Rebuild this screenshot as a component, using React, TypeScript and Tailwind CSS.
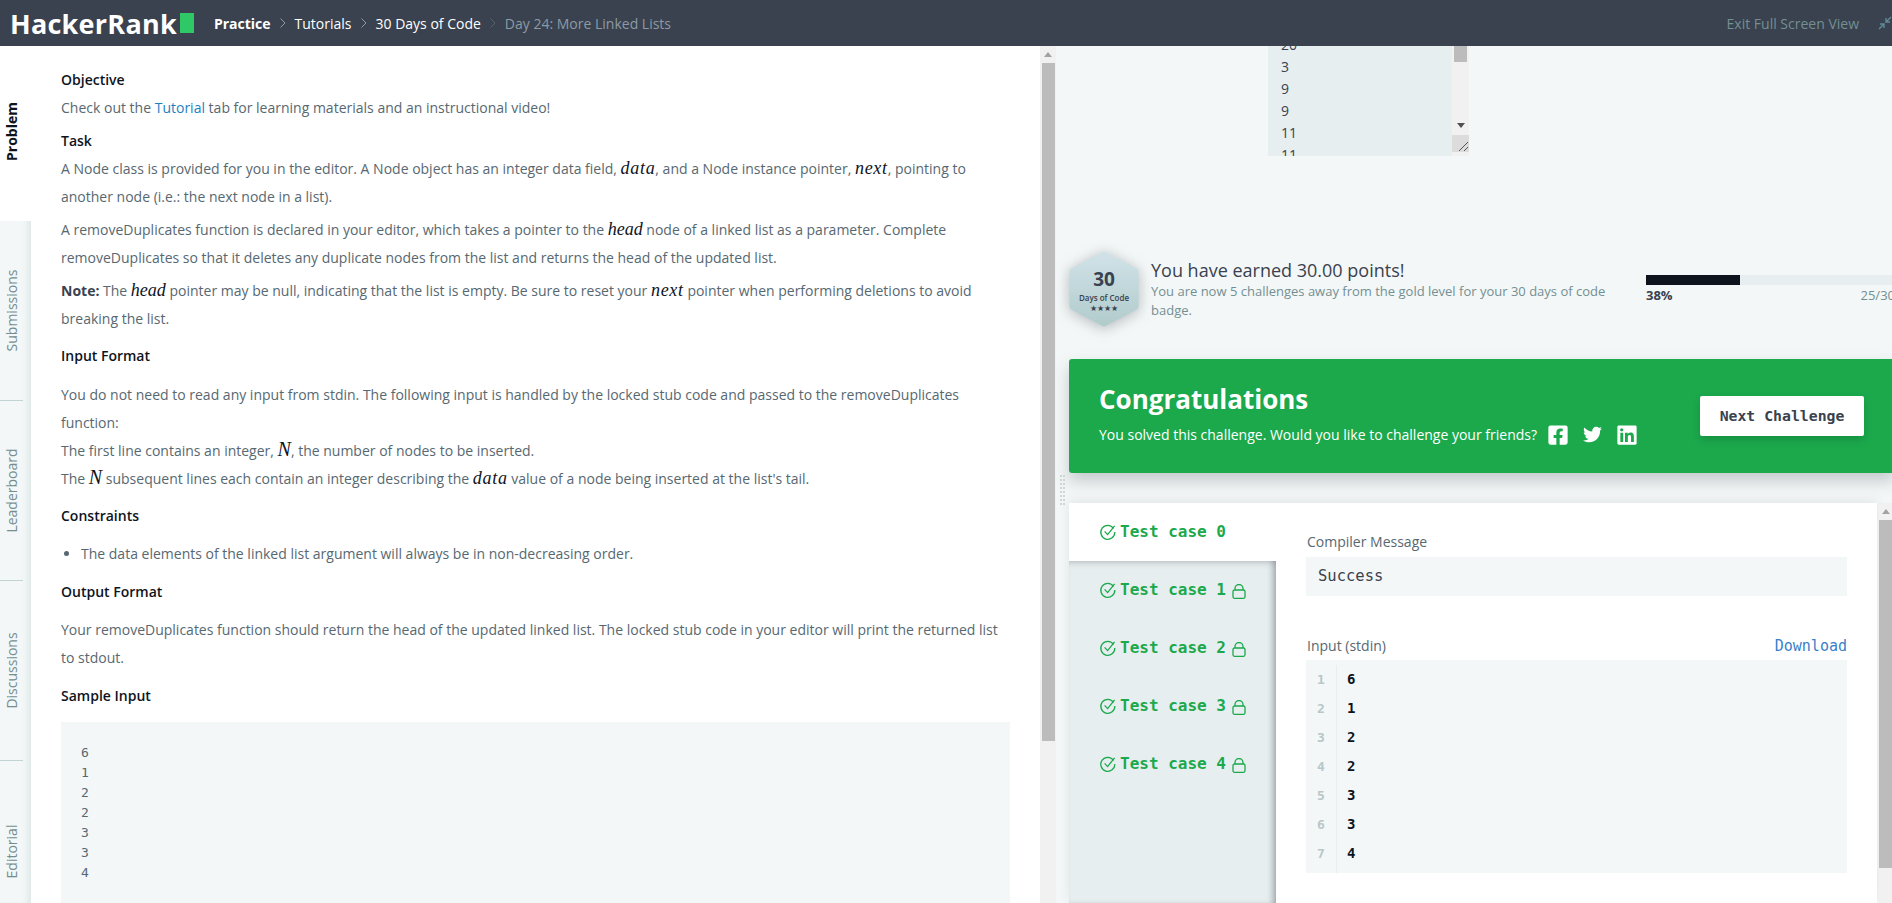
import { FaFacebookSquare, FaTwitter, FaLinkedin } from 'react-icons/fa'

// ----------------------------------------------------------------------

const Math = ({ children, className }: { children: string; className?: string }) => (
  <span className={`font-['Liberation_Serif',serif] text-[18px] italic leading-none text-[#0e141e] ${className ?? ''}`}>
    {children}
  </span>
)

const Heading = ({ children, className }: { children: string; className?: string }) => (
  <div className={`h-[28px] font-semibold leading-[28px] text-[#0e141e] ${className ?? ''}`}>{children}</div>
)

function SideTab({ label, last }: { label: string; last?: boolean }) {
  return (
    <div className={`flex h-[180px] w-[23px] items-center justify-center ${last ? '' : 'border-b border-[#c2d3d3]'}`}>
      <span className="-rotate-90 whitespace-nowrap text-[14px] text-[#738f93]">{label}</span>
    </div>
  )
}

function Check() {
  return (
    <svg width="18" height="18" viewBox="0 0 18 18" fill="none" stroke="#1ba94c" strokeWidth="1.3" className="shrink-0">
      <path d="M14.6 5.4A7 7 0 1 0 15.8 9" />
      <path d="M5.6 8.4 8.6 11.6 15.6 2.8" />
    </svg>
  )
}

function Lock() {
  return (
    <svg width="14" height="15" viewBox="0 0 14 15" fill="none" stroke="#1ba94c" strokeWidth="1.3" className="ml-[3px] mt-[2px] shrink-0">
      <rect x="1" y="6" width="12" height="8.3" rx="1.5" />
      <path d="M3 6V4.5a4 4 0 0 1 8 0V6" />
    </svg>
  )
}

function TestTab({ n, active }: { n: number; active?: boolean }) {
  return (
    <div className="flex h-[58px] items-center gap-[3px] pl-[30px]">
      <Check />
      <span className="whitespace-pre font-['DejaVu_Sans_Mono',monospace] text-[16px] font-bold text-[#1ba94c]">
        Test case {n}
      </span>
      {!active && <Lock />}
    </div>
  )
}

function Chevron({ dim }: { dim?: boolean }) {
  return (
    <svg width="8" height="12" viewBox="0 0 8 12" fill="none" stroke={dim ? '#56616d' : '#8d9aa6'} strokeWidth="1" className="mx-[8px]">
      <path d="M1.5 1.5 6 6l-4.5 4.5" />
    </svg>
  )
}

export default function App() {
  return (
    <div className="flex h-[903px] w-[1892px] flex-col overflow-hidden bg-white font-['Open_Sans',sans-serif] text-[14px] text-[#576871]">
      {/* top bar */}
      <header className="flex h-[46px] shrink-0 items-center bg-[#39424e] pl-[10px]">
        <span className="text-[27px] font-bold leading-none tracking-[0.25px] text-white">HackerRank</span>
        <span className="ml-[3px] h-[20px] w-[14px] bg-[#2ec866]" />
        <nav className="ml-[20px] flex items-center text-[14px]">
          <span className="font-bold text-white">Practice</span>
          <Chevron />
          <span className="text-white">Tutorials</span>
          <Chevron />
          <span className="text-white">30 Days of Code</span>
          <Chevron dim />
          <span className="text-[#8d9aa6]">Day 24: More Linked Lists</span>
        </nav>
        <span className="ml-auto text-[14px] text-[#738f93]">Exit Full Screen View</span>
        <svg width="14" height="14" viewBox="0 0 14 14" fill="none" stroke="#5f8a96" strokeWidth="1.4" className="ml-[19px]">
          <path d="M1 13 6 8M2 8h4v4M13 1 8 6M12 6H8V2" />
        </svg>
      </header>

      <main className="flex min-h-0 flex-1">
        {/* left rail */}
        <div className="w-[31px] shrink-0 overflow-hidden bg-[#f3f7f7] shadow-[inset_-7px_0_6px_-4px_#dde6e6]">
          <div className="flex h-[175px] items-center justify-center bg-white pb-[5px] pr-[8px]">
            <span className="-rotate-90 text-[14px] font-bold text-[#0e141e]">Problem</span>
          </div>
          <SideTab label="Submissions" />
          <SideTab label="Leaderboard" />
          <SideTab label="Discussions" />
          <SideTab label="Editorial" last />
        </div>

        {/* problem statement */}
        <div className="w-[1009px] shrink-0 overflow-hidden pl-[30px] pr-[30px] pt-[20px] leading-[28px]">
          <Heading>Objective</Heading>
          <p>
            Check out the <span className="text-[#1d7fc4]">Tutorial</span> tab for learning materials and an instructional video!
          </p>
          <Heading className="mt-[5px]">Task</Heading>
          <p>
            A Node class is provided for you in the editor. A Node object has an integer data field,{' '}
            <Math className="tracking-[0.7px]">data</Math>, and a Node instance pointer,{' '}
            <Math className="tracking-[0.7px]">next</Math>, pointing to another node (i.e.: the next node in a list).
          </p>
          <p className="mt-[5px]">
            A removeDuplicates function is declared in your editor, which takes a pointer to the <Math>head</Math> node of a
            linked list as a parameter. Complete removeDuplicates so that it deletes any duplicate nodes from the list and
            returns the head of the updated list.
          </p>
          <p className="mt-[5px]">
            <strong className="font-bold text-[#39424e]">Note:</strong> The <Math>head</Math> pointer may be null, indicating
            that the list is empty. Be sure to reset your <Math className="tracking-[0.7px]">next</Math> pointer when performing
            deletions to avoid breaking the list.
          </p>
          <Heading className="mt-[9px]">Input Format</Heading>
          <p className="mt-[11px]">
            You do not need to read any input from stdin. The following input is handled by the locked stub code and passed to
            the removeDuplicates function:
          </p>
          <p>
            The first line contains an integer, <Math className="text-[20px]">N</Math>, the number of nodes to be inserted.
          </p>
          <p>
            The <Math className="text-[20px]">N</Math> subsequent lines each contain an integer describing the{' '}
            <Math className="tracking-[0.7px]">data</Math> value of a node being inserted at the list's tail.
          </p>
          <Heading className="mt-[9px]">Constraints</Heading>
          <ul className="mt-[10px] list-disc pl-[20px]">
            <li>The data elements of the linked list argument will always be in non-decreasing order.</li>
          </ul>
          <Heading className="mt-[10px]">Output Format</Heading>
          <p className="mt-[10px]">
            Your removeDuplicates function should return the head of the updated linked list. The locked stub code in your
            editor will print the returned list to stdout.
          </p>
          <Heading className="mt-[10px]">Sample Input</Heading>
          <pre className="mt-[12px] h-[200px] bg-[#f3f7f7] pl-[20px] pt-[21px] font-['DejaVu_Sans_Mono',monospace] text-[13px] leading-[20px] text-[#576871]">
            {'6\n1\n2\n2\n3\n3\n4'}
          </pre>
        </div>

        {/* page scrollbar */}
        <div className="flex h-full w-[16px] shrink-0 flex-col items-center bg-[#f1f1f1]">
          <div className="mb-[6px] mt-[6px] h-0 w-0 border-x-[4px] border-b-[5px] border-x-transparent border-b-[#a3a3a3]" />
          <div className="h-[678px] w-[13px] bg-[#bcbcbc]" />
        </div>

        {/* results pane */}
        <div className="relative min-w-0 flex-1 overflow-hidden bg-[#f3f7f7]">
          <div className="w-[840px] pl-[13px]">
            {/* stdin echo, scrolled */}
            <div className="ml-[199px] flex h-[110px] w-[201px] overflow-hidden bg-[#e7eeef] pl-[13px]">
              <pre className="-mt-[12px] flex-1 font-['Open_Sans',sans-serif] text-[14px] leading-[22px] text-[#39424e]">
                {'20\n3\n9\n9\n11\n11'}
              </pre>
              <div className="flex w-[17px] flex-col items-center bg-[#f1f1f1]">
                <div className="h-[16px] w-[13px] bg-[#bcbcbc]" />
                <div className="mt-[61px] h-0 w-0 border-x-[4px] border-t-[5px] border-x-transparent border-t-[#505050]" />
                <div className="mt-[7px] h-[17px] w-[17px] bg-[#dcdcdc]">
                  <svg width="17" height="17" viewBox="0 0 17 17" fill="none" stroke="#555" strokeWidth="1">
                    <path d="M7 16 16 7M12 16 16 12" />
                  </svg>
                </div>
              </div>
            </div>

            {/* points */}
            <div className="mt-[95px] flex h-[76px]">
              <div className="relative flex h-[76px] w-[70px] shrink-0 flex-col items-center pt-[16px] text-[#39424e]">
                <svg
                  width="70"
                  height="76"
                  viewBox="0 0 70 76"
                  className="absolute left-0 top-0 drop-shadow-[0_2px_7px_rgba(57,66,78,0.35)]"
                >
                  <defs>
                    <linearGradient id="badge" x1="0" y1="0" x2="0" y2="1">
                      <stop offset="0" stopColor="#d0e2e8" />
                      <stop offset="1" stopColor="#b2cccc" />
                    </linearGradient>
                  </defs>
                  <polygon
                    points="35,3 67,20 67,56 35,73 3,56 3,20"
                    fill="url(#badge)"
                    stroke="url(#badge)"
                    strokeWidth="5"
                    strokeLinejoin="round"
                  />
                </svg>
                <span className="relative text-[19px] font-bold leading-[24px]">30</span>
                <span className="relative mt-[2px] text-[8px] font-semibold leading-[10px]">Days of Code</span>
                <span className="relative text-[8px] leading-[10px]">★★★★</span>
              </div>
              <div className="ml-[12px] w-[480px] pt-[7px]">
                <div className="text-[18px] leading-[24px] text-[#39424e]">You have earned 30.00 points!</div>
                <div className="text-[13px] leading-[19px] text-[#738f93]">
                  You are now 5 challenges away from the gold level for your 30 days of code badge.
                </div>
              </div>
              <div className="ml-[15px] w-[249px] shrink-0 pt-[24px]">
                <div className="h-[10px] bg-[#e7eeef]">
                  <div className="h-full w-[94px] bg-[#0e141e]" />
                </div>
                <div className="flex justify-between text-[13px] leading-[20px]">
                  <span className="font-bold text-[#39424e]">38%</span>
                  <span className="text-[#738f93]">25/30</span>
                </div>
              </div>
            </div>

            {/* congratulations */}
            <div className="mt-[32px] flex h-[114px] w-[826px] items-center rounded-[3px] bg-[#1ba94c] pl-[30px] pr-[31px] shadow-[0_8px_16px_rgba(57,66,78,0.25)]">
              <div className="mb-[5px]">
                <div className="text-[26px] font-bold leading-[34px] text-white">Congratulations</div>
                <div className="mt-[8px] flex items-center text-[14px] text-white">
                  You solved this challenge. Would you like to challenge your friends?
                  <FaFacebookSquare className="ml-[10px] text-[22px]" />
                  <FaTwitter className="ml-[14px] text-[19px]" />
                  <FaLinkedin className="ml-[14px] text-[22px]" />
                </div>
              </div>
              <div className="ml-auto flex h-[40px] w-[164px] items-center justify-center rounded-[2px] bg-white font-['DejaVu_Sans_Mono',monospace] text-[14.8px] font-bold text-[#39424e] shadow-[0_4px_8px_rgba(0,0,0,0.15)]">
                Next Challenge
              </div>
            </div>

            {/* test cases */}
            <div className="mt-[30px] flex h-[400px] w-[808px] bg-white shadow-[0_-2px_10px_rgba(57,66,78,0.1)]">
              <div className="flex w-[207px] shrink-0 flex-col">
                <TestTab n={0} active />
                <div className="flex-1 bg-[#e7eeef] shadow-[inset_-6px_0_6px_-3px_rgba(57,66,78,0.4),inset_0_6px_6px_-4px_rgba(57,66,78,0.2)]">
                  <TestTab n={1} />
                  <TestTab n={2} />
                  <TestTab n={3} />
                  <TestTab n={4} />
                </div>
              </div>
              <div className="min-w-0 flex-1 pl-[30px] pr-[30px] pt-[27px]">
                <div className="h-[27px] pl-[1px] text-[14px] leading-[24px] text-[#576871]">Compiler Message</div>
                <div className="flex h-[39px] items-center bg-[#f3f7f7] pl-[12px] font-['DejaVu_Sans_Mono',monospace] text-[15.5px] text-[#39424e]">
                  Success
                </div>
                <div className="mt-[38px] flex h-[26px] items-start justify-between pl-[1px] leading-[24px]">
                  <span>Input (stdin)</span>
                  <span className="font-['DejaVu_Sans_Mono',monospace] text-[15px] text-[#3a80c9]">Download</span>
                </div>
                <div className="flex h-[213px] bg-[#f3f7f7] pt-[5px]">
                  <div className="w-[31px] shrink-0 border-r border-[#e7eeef] text-center font-['DejaVu_Sans_Mono',monospace] text-[13px] font-bold leading-[29px] text-[#b7c7c9]">
                    {[1, 2, 3, 4, 5, 6, 7].map((n) => (
                      <div key={n}>{n}</div>
                    ))}
                  </div>
                  <div className="pl-[10px] font-['DejaVu_Sans_Mono',monospace] text-[14px] font-bold leading-[29px] text-[#0e141e]">
                    {[6, 1, 2, 2, 3, 3, 4].map((v, i) => (
                      <div key={i}>{v}</div>
                    ))}
                  </div>
                </div>
              </div>
            </div>
          </div>

          {/* inner scrollbar of the test case panel */}
          <div className="absolute right-0 top-[457px] flex h-[400px] w-[13px] flex-col items-center bg-[#f1f1f1]">
            <div className="mb-[6px] mt-[6px] h-0 w-0 border-x-[4px] border-b-[5px] border-x-transparent border-b-[#a3a3a3]" />
            <div className="h-[348px] w-[13px] bg-[#bcbcbc]" />
          </div>
          {/* split handle */}
          <div className="absolute left-[4px] top-[429px] grid grid-cols-2 gap-x-[1px] gap-y-[2px]">
            {Array.from({ length: 16 }).map((_, i) => (
              <span key={i} className="h-[2px] w-[2px] bg-[#cfd4d4]" />
            ))}
          </div>
        </div>
      </main>
    </div>
  )
}
